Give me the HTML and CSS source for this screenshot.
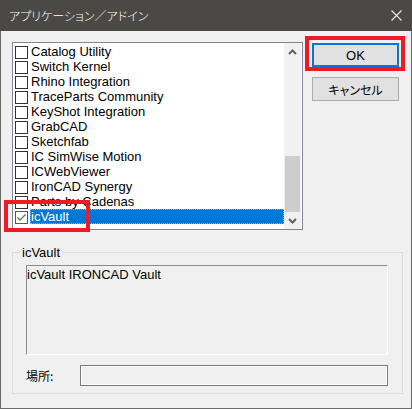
FILE: index.html
```html
<!DOCTYPE html>
<html lang="ja">
<head>
<meta charset="utf-8">
<title>アプリケーション／アドイン</title>
<link rel="stylesheet" href="styles.css">
</head>
<body>
<div class="window">
  <div class="titlebar">
    <span class="title">アプリケーション／アドイン</span>
    <svg class="close" width="11" height="11" viewBox="0 0 11 11"><path d="M0.5 0.5 L10.5 10.5 M10.5 0.5 L0.5 10.5" stroke="#e6e6e6" stroke-width="1.2" fill="none"/></svg>
  </div>
  <div class="client">
    <div class="top">
      <div class="listbox">
        <ul class="items">
          <li class="item"><span class="cb"></span><span class="label">Catalog Utility</span></li>
          <li class="item"><span class="cb"></span><span class="label">Switch Kernel</span></li>
          <li class="item"><span class="cb"></span><span class="label">Rhino Integration</span></li>
          <li class="item"><span class="cb"></span><span class="label">TraceParts Community</span></li>
          <li class="item"><span class="cb"></span><span class="label">KeyShot Integration</span></li>
          <li class="item"><span class="cb"></span><span class="label">GrabCAD</span></li>
          <li class="item"><span class="cb"></span><span class="label">Sketchfab</span></li>
          <li class="item"><span class="cb"></span><span class="label">IC SimWise Motion</span></li>
          <li class="item"><span class="cb"></span><span class="label">ICWebViewer</span></li>
          <li class="item"><span class="cb"></span><span class="label">IronCAD Synergy</span></li>
          <li class="item"><span class="cb"></span><span class="label">Parts by Cadenas</span></li>
          <li class="item selected"><span class="cb cb-checked"><svg width="11" height="11" viewBox="0 0 11 11"><polyline points="1.5,5.5 4,8 9.5,2.5" stroke="#6d6d6d" stroke-width="1.4" fill="none"/></svg></span><span class="label">icVault</span></li>
        </ul>
        <div class="scrollbar">
          <div class="arrow"><svg width="9" height="6" viewBox="0 0 9 6"><polyline points="1,5 4.5,1.5 8,5" stroke="#606060" stroke-width="2" fill="none"/></svg></div>
          <div class="track"><div class="thumb"></div></div>
          <div class="arrow"><svg width="9" height="6" viewBox="0 0 9 6"><polyline points="1,1 4.5,4.5 8,1" stroke="#606060" stroke-width="2" fill="none"/></svg></div>
        </div>
      </div>
      <div class="buttons">
        <div class="btn btn-default btn-ok">OK</div>
        <div class="btn">キャンセル</div>
      </div>
    </div>
    <div class="group">
      <span class="legend">icVault</span>
      <div class="desc">icVault IRONCAD Vault</div>
      <div class="loc">
        <span class="loc-label">場所:</span>
        <div class="loc-field"></div>
      </div>
    </div>
  </div>
  <div class="mark mark-ok"></div>
  <div class="mark mark-check"></div>
</div>
</body>
</html>
```
FILE: styles.css
```css
* { box-sizing: border-box; }
html, body { margin: 0; padding: 0; }
body {
  width: 412px;
  height: 409px;
  overflow: hidden;
  background: #f0f0f0;
  font-family: "Liberation Sans", "Noto Sans CJK JP", sans-serif;
  font-size: 13px;
  color: #000;
}
.window {
  position: relative;
  width: 412px;
  height: 409px;
  border: 1px solid #6b6b6b;
  border-top: none;
  background: #f0f0f0;
}
.titlebar {
  height: 31px;
  margin: 0 -1px;
  background: #4b4946;
  color: #fff;
  display: flex;
  align-items: center;
  justify-content: space-between;
  padding: 0 10px 0 9px;
  font-family: "Noto Sans CJK JP", sans-serif;
  font-size: 12px;
  font-weight: 300;
  font-feature-settings: "palt";
}
.close { display: block; }
.client { padding: 11px 0 0 11px; }
.top { display: flex; align-items: flex-start; }
.listbox {
  width: 291px;
  height: 188px;
  border: 1px solid #828790;
  background: #fff;
  display: flex;
}
.items {
  list-style: none;
  margin: 0;
  padding: 1px 0 0 0;
  width: 271px;
}
.item {
  height: 15px;
  display: flex;
  align-items: center;
}
.cb {
  flex: none;
  width: 13px;
  height: 13px;
  margin: 1px 2px 0 2px;
  border: 1px solid #333;
  background: #fff;
  display: flex;
}
.cb-checked { border-color: #555; }
.label {
  flex: 1;
  height: 15px;
  line-height: 15px;
  padding-left: 1px;
  white-space: nowrap;
}
.selected .label {
  background: #0078d7;
  color: #fff;
  outline: 1px dotted #f5a04a;
  outline-offset: -1px;
}
.scrollbar {
  width: 17px;
  background: #f0f0f0;
  display: flex;
  flex-direction: column;
}
.arrow {
  height: 17px;
  display: flex;
  align-items: center;
  justify-content: center;
}
.track {
  flex: 1;
  display: flex;
  flex-direction: column;
  justify-content: flex-end;
}
.thumb {
  height: 56px;
  margin: 0 1px;
  background: #cdcdcd;
}
.buttons {
  margin-left: 9px;
  padding-top: 1px;
  display: flex;
  flex-direction: column;
  gap: 10px;
}
.btn {
  width: 87px;
  height: 24px;
  background: #e1e1e1;
  border: 1px solid #adadad;
  display: flex;
  align-items: center;
  justify-content: center;
  font-family: "Noto Sans CJK JP", sans-serif;
  font-size: 12px;
  font-feature-settings: "palt";
}
.btn-default { border: 2px solid #0078d7; }
.btn-ok {
  font-family: "Liberation Sans", sans-serif;
  font-size: 13px;
}
.group {
  position: relative;
  margin-top: 22px;
  width: 391px;
  border: 1px solid #dcdcdc;
  padding: 12px 14px 7px 13px;
}
.legend {
  position: absolute;
  top: -8px;
  left: 7px;
  padding: 0 2px;
  line-height: 15px;
  background: #f0f0f0;
}
.desc {
  height: 90px;
  border: 1px solid;
  border-color: #8a8a8a #fff #fff #8a8a8a;
  padding: 1px 0 0 0;
  line-height: 15px;
}
.loc {
  margin-top: 10px;
  display: flex;
  align-items: center;
}
.loc-label {
  width: 54px;
  font-family: "Noto Sans CJK JP", sans-serif;
  font-size: 12px;
}
.loc-field {
  flex: 1;
  height: 21px;
  border: 1px solid #7a7a7a;
  box-shadow: inset 1px 1px 0 #fff, inset -1px -1px 0 #fff;
}
.mark {
  position: absolute;
  border: 4px solid #ed1c24;
}
.mark-ok { left: 304px; top: 36px; width: 100px; height: 35px; }
.mark-check { left: 3px; top: 200px; width: 86px; height: 32px; }
```
